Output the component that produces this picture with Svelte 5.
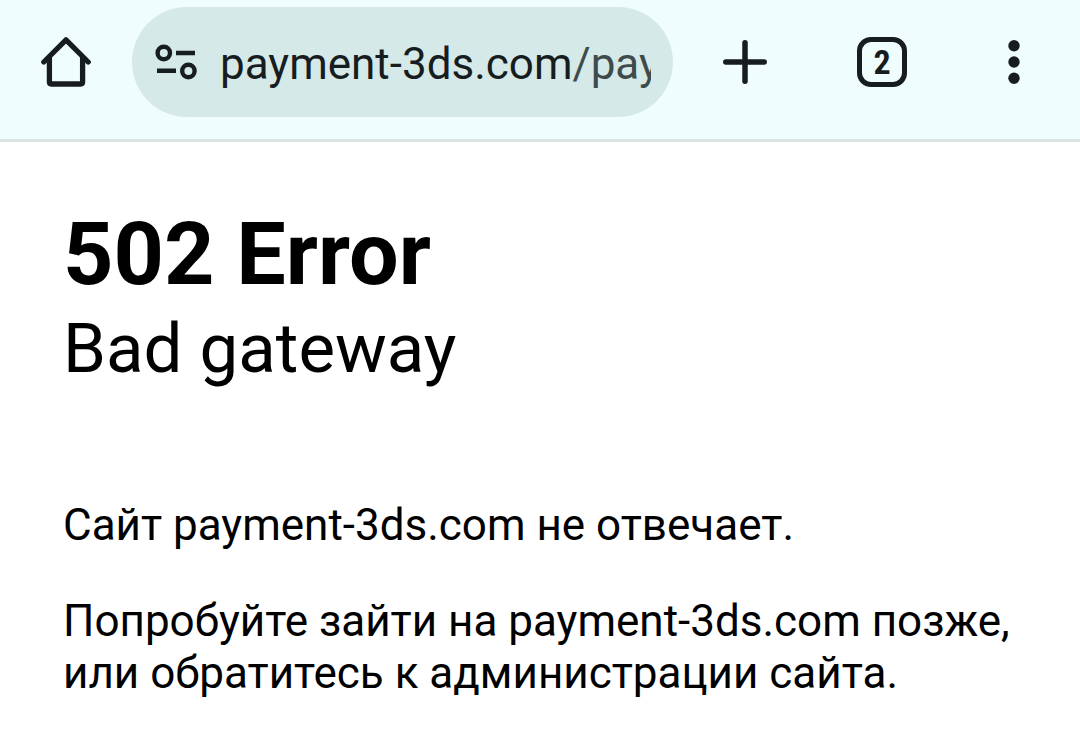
<script>
	const host = 'payment-3ds.com';
	let path = '/pay';
	let tabs = 2;
</script>

<header>
	<button class="icon" aria-label="Home">
		<svg width="52" height="52" viewBox="0 0 52 52" fill="none" stroke="#171d1e" stroke-width="5.3">
			<path d="M3.8 26 26 3.8 48.2 26" stroke-linecap="round" stroke-linejoin="round" />
			<path d="M9.4 21v25q0 2 2 2h29.2q2 0 2-2V21" />
		</svg>
	</button>
	<div class="address">
		<button class="site" aria-label="Site settings">
			<svg width="44" height="36" viewBox="0 0 44 36" fill="none" stroke="#171d1e" stroke-width="4.4">
				<circle cx="9.8" cy="9" r="6.2" />
				<path d="M22 9h19M3 26.8h19" />
				<circle cx="34.4" cy="27" r="6.2" />
			</svg>
		</button>
		<a href={path}>{host}<span>{path}</span></a>
	</div>
	<button class="icon" aria-label="New tab">
		<svg width="44" height="44" viewBox="0 0 44 44" stroke="#171d1e" stroke-width="5.5" stroke-linecap="round">
			<path d="M22 2.8v38.4M2.8 22h38.4" />
		</svg>
	</button>
	<button class="icon" aria-label="Tabs"><span class="tabs">{tabs}</span></button>
	<button class="icon" aria-label="Menu">
		<svg width="12" height="44" viewBox="0 0 12 44" fill="#171d1e">
			<circle cx="6" cy="5.7" r="5.7" />
			<circle cx="6" cy="22" r="5.7" />
			<circle cx="6" cy="38.3" r="5.7" />
		</svg>
	</button>
</header>

<main>
	<h1>502 Error</h1>
	<h2>Bad gateway</h2>
	<p>Сайт {host} не отвечает.</p>
	<p>Попробуйте зайти на {host} позже,<br />или обратитесь к администрации сайта.</p>
</main>

<style>
	:global(body) {
		margin: 0;
		background: #fff;
		color: #000;
		font-family: Roboto, sans-serif;
	}
	header {
		display: grid;
		grid-template-columns: 132px 1fr 144px 130px 133px;
		align-items: center;
		padding: 7px 0 22px;
		background: #f0fdfd;
		border-bottom: 3px solid #d9e4e3;
	}
	button {
		display: flex;
		align-items: center;
		justify-content: center;
		padding: 0;
		border: 0;
		background: none;
		color: #171d1e;
		font-family: inherit;
	}
	.icon {
		height: 110px;
	}
	.address {
		display: flex;
		align-items: center;
		gap: 22px;
		height: 110px;
		padding: 0 22px;
		box-sizing: border-box;
		min-width: 0;
		border-radius: 55px;
		background: #d5e9e9;
	}
	a {
		flex: 1;
		overflow: hidden;
		padding-top: 4px;
		color: #171d1e;
		font-size: 44px;
		line-height: 56px;
		white-space: nowrap;
		text-decoration: none;
	}
	a span {
		color: #3f4b4b;
	}
	.tabs {
		width: 50px;
		height: 50px;
		box-sizing: border-box;
		border: 5px solid #171d1e;
		border-radius: 14px;
		font-family: 'Roboto Condensed', Roboto, sans-serif;
		font-size: 34px;
		font-weight: 700;
		line-height: 40px;
	}
	main {
		padding: 64px 63px 0;
	}
	h1,
	h2,
	p {
		margin: 0;
	}
	h1 {
		font-size: 88px;
		line-height: 96px;
	}
	h2 {
		margin-bottom: 103px;
		font-size: 69px;
		font-weight: 400;
		line-height: 94px;
	}
	p {
		margin-bottom: 44px;
		font-size: 44px;
		line-height: 52px;
	}
</style>
